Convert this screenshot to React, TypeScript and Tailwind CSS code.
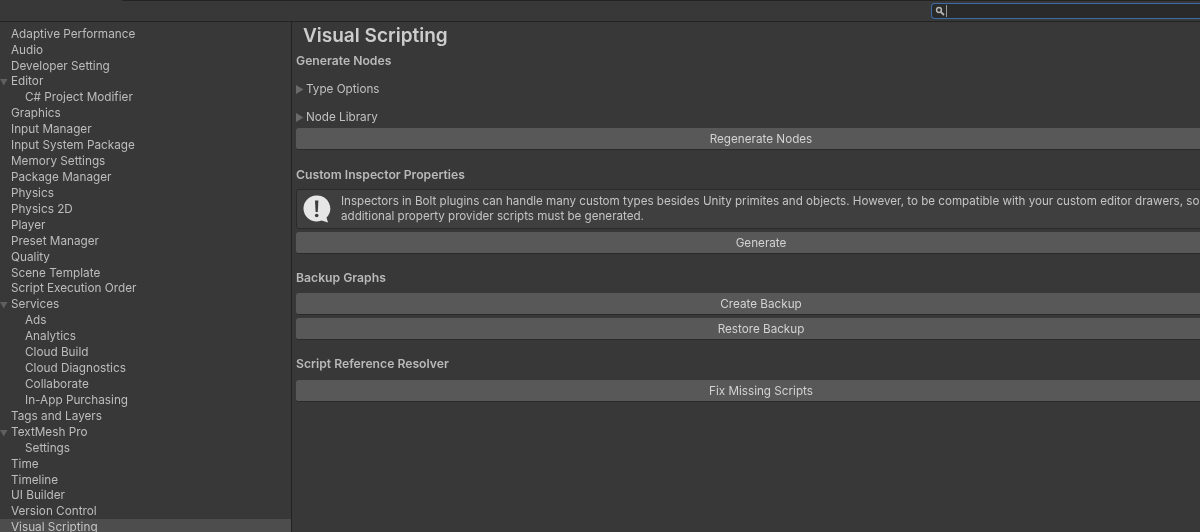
const items: [string, number, boolean?][] = [
  ["Adaptive Performance", 0],
  ["Audio", 0],
  ["Developer Setting", 0],
  ["Editor", 0, true],
  ["C# Project Modifier", 1],
  ["Graphics", 0],
  ["Input Manager", 0],
  ["Input System Package", 0],
  ["Memory Settings", 0],
  ["Package Manager", 0],
  ["Physics", 0],
  ["Physics 2D", 0],
  ["Player", 0],
  ["Preset Manager", 0],
  ["Quality", 0],
  ["Scene Template", 0],
  ["Script Execution Order", 0],
  ["Services", 0, true],
  ["Ads", 1],
  ["Analytics", 1],
  ["Cloud Build", 1],
  ["Cloud Diagnostics", 1],
  ["Collaborate", 1],
  ["In-App Purchasing", 1],
  ["Tags and Layers", 0],
  ["TextMesh Pro", 0, true],
  ["Settings", 1],
  ["Time", 0],
  ["Timeline", 0],
  ["UI Builder", 0],
  ["Version Control", 0],
];

function Down() {
  return (
    <svg width="8" height="7" viewBox="0 0 8 7" className="absolute left-0 top-[6px]">
      <path d="M0 0H7.5L3.75 6.5Z" fill="#5f5f5f" />
    </svg>
  );
}

function Right() {
  return (
    <svg width="8" height="9" viewBox="0 0 8 9" className="shrink-0">
      <path d="M0 0V9L7.5 4.5Z" fill="#6a6a6a" />
    </svg>
  );
}

function Btn({ label, className = "" }: { label: string; className?: string }) {
  return (
    <div className={`h-[22px] w-[930px] shrink-0 rounded-[3px] bg-[#585858] border-b border-[#2a2a2a] pt-[2px] flex items-center justify-center text-[11.7px] text-[#d2d2d2] ${className}`}>
      {label}
    </div>
  );
}

function Heading({ label, className = "" }: { label: string; className?: string }) {
  return <div className={`h-4 leading-4 font-semibold text-[12.2px] text-[#b9b9b9] ${className}`}>{label}</div>;
}

function Foldout({ label, className = "" }: { label: string; className?: string }) {
  return (
    <div className={`h-4 leading-[16px] flex items-center gap-[2px] text-[11.7px] text-[#c0c0c0] ${className}`}>
      <Right />
      <span>{label}</span>
    </div>
  );
}

export default function App() {
  return (
    <div className="w-[1200px] h-[532px] overflow-hidden bg-[#383838] flex flex-col font-['Inter',sans-serif] blur-[0.35px]">
      <div className="h-[22px] shrink-0 border-b border-[#232323] relative flex justify-end items-start">
        <div className="absolute left-[122px] right-0 top-0 h-px bg-[#232323]" />
        <div className="mt-[3px] h-[16px] w-[269px] rounded-l-[4px] border border-r-0 border-[#3a6ca8] bg-[#2a2a2a] flex items-center pl-[3px]">
          <svg width="10" height="10" viewBox="0 0 10 10" fill="none" stroke="#b4b4b4">
            <circle cx="4" cy="4" r="2.4" strokeWidth="1.5" />
            <path d="M5.8 5.8L9 9" strokeWidth="1.8" />
          </svg>
          <div className="ml-[1px] w-px h-[12px] bg-[#9a9a9a]" />
        </div>
      </div>
      <div className="flex flex-1 min-h-0">
        <div className="w-[292px] shrink-0 border-r border-[#232323] pt-[3.7px] overflow-hidden text-[11.75px] text-[#bdbdbd]">
          {items.map(([label, depth, open]) => (
            <div key={label} className={`relative h-[15.93px] leading-[16px] ${depth ? "pl-[25px]" : "pl-[11px]"}`}>
              {open && <Down />}
              {label}
            </div>
          ))}
          <div className="h-4 leading-[16px] pl-[11px] bg-[#4d4d4d] text-[#c4c4c4]">Visual Scripting</div>
        </div>
        <div className="flex-1 min-w-0 overflow-hidden pl-1 flex flex-col items-start">
          <div className="h-[26px] pl-[7px] leading-[28px] text-[19px] font-semibold text-[#cdcdcd]">Visual Scripting</div>
          <Heading label="Generate Nodes" className="mt-[5px]" />
          <Foldout label="Type Options" className="mt-[12px]" />
          <Foldout label="Node Library" className="mt-[12px]" />
          <Btn label="Regenerate Nodes" className="mt-[3px]" />
          <Heading label="Custom Inspector Properties" className="mt-[17px]" />
          <div className="mt-[6px] h-[40px] w-[930px] shrink-0 rounded-[3px] border border-[#2a2a2a] bg-[#3f3f3f] flex items-center text-[11.62px] text-[#c4c4c4] leading-[15px]">
            <svg width="30" height="30" viewBox="0 0 30 30" className="ml-[5px] shrink-0">
              <path d="M14.5 1.5A13 13 0 1 0 19.5 26.5L26 28.5L24.5 23.5A13 13 0 0 0 14.5 1.5Z" fill="#e6e6e6" />
              <path d="M13 6.5H16.4L15.8 18H13.6Z" fill="#3c3c3c" />
              <circle cx="14.7" cy="21.5" r="1.8" fill="#3c3c3c" />
            </svg>
            <div className="ml-[9px] whitespace-nowrap">
              <div>Inspectors in Bolt plugins can handle many custom types besides Unity primites and objects. However, to be compatible with your custom editor drawers, some</div>
              <div>additional property provider scripts must be generated.</div>
            </div>
          </div>
          <Btn label="Generate" className="mt-[3px]" />
          <Heading label="Backup Graphs" className="mt-[16px]" />
          <Btn label="Create Backup" className="mt-[7px]" />
          <Btn label="Restore Backup" className="mt-[3px]" />
          <Heading label="Script Reference Resolver" className="mt-[16px]" />
          <Btn label="Fix Missing Scripts" className="mt-[8px]" />
        </div>
      </div>
    </div>
  );
}
